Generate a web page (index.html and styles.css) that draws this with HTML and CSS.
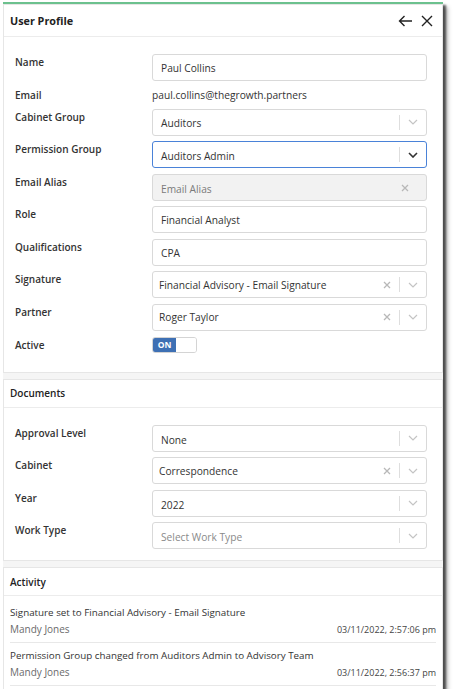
FILE: index.html
```html
<!DOCTYPE html>
<html>
<head>
<meta charset="utf-8">
<link rel="stylesheet" href="styles.css">
</head>
<body>
<div class="window">
  <section class="card">
    <header class="card-head main-head">
      <h1>User Profile</h1>
      <div class="head-actions">
        <svg width="15" height="12" viewBox="0 0 15 12"><path d="M14 6H1.5M6.5 1L1.5 6l5 5" fill="none" stroke="#222" stroke-width="1.4"/></svg>
        <svg width="12" height="12" viewBox="0 0 12 12"><path d="M1 1l10 10M11 1L1 11" fill="none" stroke="#222" stroke-width="1.4"/></svg>
      </div>
    </header>
    <div class="form">
      <div class="row"><label>Name</label><div class="field input">Paul Collins</div></div>
      <div class="row short"><label>Email</label><div class="plain">paul.collins@thegrowth.partners</div></div>
      <div class="row"><label>Cabinet Group</label><div class="field select"><span class="val">Auditors</span><span class="sep"></span><span class="chev"><svg width="10" height="6" viewBox="0 0 10 6"><path d="M1 1l4 4 4-4" fill="none" stroke="#c4c4c4" stroke-width="1.2"/></svg></span></div></div>
      <div class="row"><label>Permission Group</label><div class="field select focus"><span class="val">Auditors Admin</span><span class="sep"></span><span class="chev"><svg width="10" height="6" viewBox="0 0 10 6"><path d="M1 1l4 4 4-4" fill="none" stroke="#333" stroke-width="1.6"/></svg></span></div></div>
      <div class="row"><label>Email Alias</label><div class="field input disabled"><span class="val">Email Alias</span><span class="clear"><svg width="8" height="8" viewBox="0 0 8 8"><path d="M1 1l6 6M7 1L1 7" stroke="#b8b8b8" stroke-width="1.3"/></svg></span></div></div>
      <div class="row"><label>Role</label><div class="field input">Financial Analyst</div></div>
      <div class="row"><label>Qualifications</label><div class="field input">CPA</div></div>
      <div class="row"><label>Signature</label><div class="field select"><span class="val tight">Financial Advisory - Email Signature</span><span class="clear"><svg width="8" height="8" viewBox="0 0 8 8"><path d="M1 1l6 6M7 1L1 7" stroke="#b8b8b8" stroke-width="1.3"/></svg></span><span class="sep"></span><span class="chev"><svg width="10" height="6" viewBox="0 0 10 6"><path d="M1 1l4 4 4-4" fill="none" stroke="#c4c4c4" stroke-width="1.2"/></svg></span></div></div>
      <div class="row"><label>Partner</label><div class="field select"><span class="val tight">Roger Taylor</span><span class="clear"><svg width="8" height="8" viewBox="0 0 8 8"><path d="M1 1l6 6M7 1L1 7" stroke="#b8b8b8" stroke-width="1.3"/></svg></span><span class="sep"></span><span class="chev"><svg width="10" height="6" viewBox="0 0 10 6"><path d="M1 1l4 4 4-4" fill="none" stroke="#c4c4c4" stroke-width="1.2"/></svg></span></div></div>
      <div class="row toggle-row"><label>Active</label><div class="toggle"><span class="on">ON</span><span class="off"></span></div></div>
    </div>
  </section>

  <section class="card">
    <header class="card-head"><h2>Documents</h2></header>
    <div class="form docs">
      <div class="row"><label>Approval Level</label><div class="field select"><span class="val low">None</span><span class="sep"></span><span class="chev"><svg width="10" height="6" viewBox="0 0 10 6"><path d="M1 1l4 4 4-4" fill="none" stroke="#c4c4c4" stroke-width="1.2"/></svg></span></div></div>
      <div class="row"><label>Cabinet</label><div class="field select"><span class="val tight">Correspondence</span><span class="clear"><svg width="8" height="8" viewBox="0 0 8 8"><path d="M1 1l6 6M7 1L1 7" stroke="#b8b8b8" stroke-width="1.3"/></svg></span><span class="sep"></span><span class="chev"><svg width="10" height="6" viewBox="0 0 10 6"><path d="M1 1l4 4 4-4" fill="none" stroke="#c4c4c4" stroke-width="1.2"/></svg></span></div></div>
      <div class="row"><label>Year</label><div class="field select"><span class="val low">2022</span><span class="sep"></span><span class="chev"><svg width="10" height="6" viewBox="0 0 10 6"><path d="M1 1l4 4 4-4" fill="none" stroke="#c4c4c4" stroke-width="1.2"/></svg></span></div></div>
      <div class="row"><label>Work Type</label><div class="field select"><span class="val placeholder">Select Work Type</span><span class="sep"></span><span class="chev"><svg width="10" height="6" viewBox="0 0 10 6"><path d="M1 1l4 4 4-4" fill="none" stroke="#c4c4c4" stroke-width="1.2"/></svg></span></div></div>
    </div>
  </section>

  <section class="card">
    <header class="card-head"><h2>Activity</h2></header>
    <ul class="activity">
      <li>
        <div class="act-title">Signature set to Financial Advisory - Email Signature</div>
        <div class="act-meta"><span class="act-user">Mandy Jones</span><span class="act-time">03/11/2022, 2:57:06 pm</span></div>
      </li>
      <li>
        <div class="act-title">Permission Group changed from Auditors Admin to Advisory Team</div>
        <div class="act-meta"><span class="act-user">Mandy Jones</span><span class="act-time">03/11/2022, 2:56:37 pm</span></div>
      </li>
    </ul>
  </section>
</div>
</body>
</html>
```

FILE: styles.css
```css
* { box-sizing: border-box; }
html, body { margin: 0; padding: 0; background: #ffffff; }
body {
  font-family: "Open Sans", "Noto Sans", sans-serif;
  font-size: 10.2px;
  color: #333;
  padding: 2px 0 0 3px;
}
.window {
  width: 440px;
  height: 687px;
  background: #f5f5f5;
  border-top: 2px solid #6cc18e;
  box-shadow: 3px 3px 2px rgba(0,0,0,0.6), 5px 5px 4px rgba(0,0,0,0.25);
  display: flex;
  flex-direction: column;
  gap: 6px;
}
.card {
  background: #fff;
  border: 1px solid #e6e6e6;
}
.card-head {
  height: 28px;
  display: flex;
  align-items: center;
  justify-content: space-between;
  padding: 0 6px;
  border-bottom: 1px solid #ececec;
}
.main-head { height: 32px; }
h1 {
  margin: 0;
  font-size: 10.8px;
  font-weight: 700;
  color: #222;
}
h2 {
  margin: 0;
  font-size: 10px;
  font-weight: 600;
  color: #222;
  padding-top: 0;
}
.head-actions {
  display: flex;
  align-items: center;
  gap: 8px;
  padding-right: 3px;
}
.form {
  padding: 17px 15px 19px 11px;
  display: flex;
  flex-direction: column;
  gap: 5.45px;
}
.form.docs { padding-top: 17px; padding-bottom: 11px; }
.row {
  display: grid;
  grid-template-columns: 137px 1fr;
  align-items: center;
  height: 27px;
}
.row.short { height: 17px; }
.row.toggle-row { height: 16px; margin-top: 1px; }
.row label {
  align-self: start;
  line-height: 16px;
  font-weight: 600;
  font-size: 10px;
  color: #333;
}
.row.short label, .row.toggle-row label { align-self: center; }
.plain { font-size: 10.2px; color: #333; }
.field {
  height: 27px;
  border: 1px solid #d9d9d9;
  border-radius: 3px;
  display: flex;
  align-items: center;
  font-size: 10.2px;
  color: #333;
  background: #fff;
}
.field.input { padding: 0 8px; padding-top: 1px; }
.field.disabled { background: #f2f2f2; color: #7a7a7a; justify-content: space-between; padding-right: 9px; }
.field.focus { border-color: #4a82d8; }
.field.select { padding-left: 8px; }
.val { flex: 1; padding-top: 2px; white-space: nowrap; }
.val.tight { padding-left: 0; padding-top: 0; margin-left: -2px; }
.val.low { padding-top: 3px; }
.val.placeholder { color: #8a8a8a; padding-top: 2px; }
.clear { display: flex; align-items: center; padding: 0 8px; }
.sep { width: 1px; height: 15px; background: #dedede; }
.chev { width: 26px; display: flex; justify-content: center; align-items: center; }
.toggle {
  width: 45px;
  height: 16px;
  border: 1px solid #d4d4d4;
  border-radius: 3px;
  display: flex;
  overflow: hidden;
}
.toggle .on {
  width: 23px;
  background: #3e70b4;
  color: #fff;
  font-size: 8.5px;
  font-weight: 700;
  display: flex;
  align-items: center;
  justify-content: center;
}
.toggle .off { flex: 1; background: #fff; }
.activity {
  list-style: none;
  margin: 0 6px;
  padding: 4px 0 3px;
}
.activity li {
  padding: 5px 0 4px;
  border-bottom: 1px solid #e8e8e8;
}
.act-title { line-height: 16px; font-size: 9.8px; color: #333; }
.act-meta {
  display: flex;
  justify-content: space-between;
  align-items: baseline;
  line-height: 16px;
}
.act-user { color: #6b6b6b; font-size: 10px; }
.act-time { color: #444; font-size: 9px; }
```
